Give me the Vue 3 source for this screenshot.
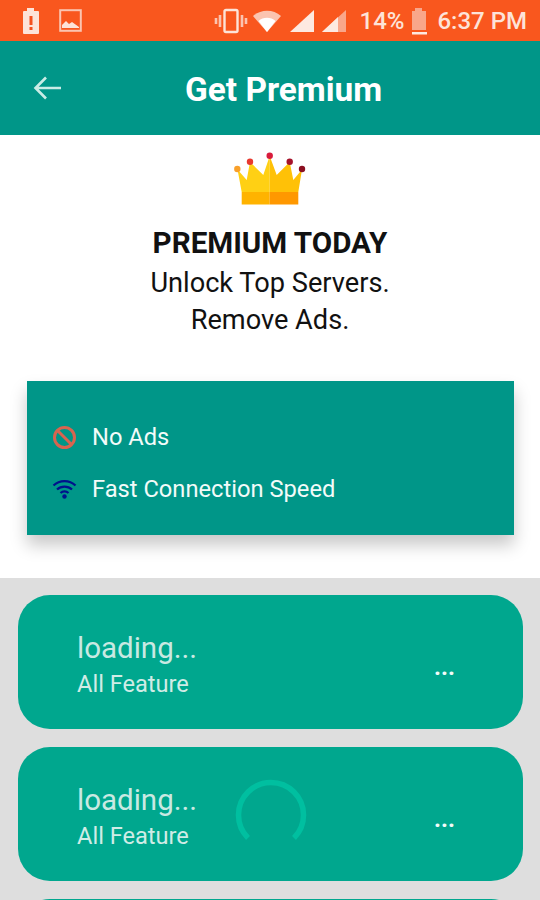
<template>
  <div class="page">
    <div class="status-bar">
      <div class="status-left">
        <svg width="20" height="28" viewBox="0 0 20 28"><path d="M6 1h7v3h4a1 1 0 0 1 1 1v21a1 1 0 0 1-1 1H3a1 1 0 0 1-1-1V5a1 1 0 0 1 1-1h3z" fill="#fde3d8"/><rect x="8.5" y="9" width="3" height="9" fill="#f4511e"/><rect x="8.5" y="20" width="3" height="3" fill="#f4511e"/></svg>
        <svg width="23" height="23" viewBox="0 0 23 23"><rect x="1.2" y="1.2" width="20.6" height="20.6" fill="none" stroke="#fbc4b0" stroke-width="2"/><path d="M3 19v-3l4-4 3 3 3-2 7 5v1z" fill="#fde3d8"/></svg>
      </div>
      <div class="status-right">
        <svg class="vibrate" width="34" height="26" viewBox="0 0 34 26"><rect x="10.5" y="2" width="13" height="22" rx="1.5" fill="none" stroke="#fde3d8" stroke-width="2.4"/><path d="M6 7v12M2 10v6M28 7v12M32 10v6" stroke="#fbc4b0" stroke-width="2.6" fill="none"/></svg>
        <svg class="wifi" width="30" height="24" viewBox="0 0 30 24"><path d="M1 7a21 21 0 0 1 28 0L15 23z" fill="#fbc4b0"/><path d="M6.500 12a13 13 0 0 1 17 0L15 23z" fill="#fff"/></svg>
        <svg class="signal" width="26" height="24" viewBox="0 0 26 24"><path d="M1 23L25 1v22z" fill="#fde9e1"/></svg>
        <svg class="signal-two" width="26" height="24" viewBox="0 0 26 24"><path d="M1 23L25 1v22z" fill="#f9a68a"/><path d="M1 23L17 8v15z" fill="#fde9e1"/></svg>
        <span class="pct">14%</span>
        <svg class="battery" width="18" height="28" viewBox="0 0 18 28"><path d="M5 1h7v3h4v19H2V4h3z" fill="#f9a68a"/><rect x="2" y="25" width="15" height="2.500" fill="#fde9e1"/></svg>
        <span class="clock">6:37 PM</span>
      </div>
    </div>

    <div class="toolbar">
      <svg class="back" width="30" height="30" viewBox="0 0 30 30"><path d="M28 15H3M13 4.500L2.500 15 13 25.500" fill="none" stroke="#c9ece6" stroke-width="2.600"/></svg>
      <h1>Get Premium</h1>
    </div>

    <div class="intro">
      <svg class="crown" width="72" height="52" viewBox="0 0 72 52">
        <path d="M35.700 3L29.300 22 16 9 12.700 27 3.500 16.500 7.700 39H35.700z" fill="#ffd014"/>
        <path d="M35.700 3L42.700 22 55.700 9 59.300 27 68 16.500 64.300 39H35.700z" fill="#ffc107"/>
        <rect x="7.700" y="39" width="28" height="12.500" fill="#ffb300"/>
        <rect x="35.700" y="39" width="28.600" height="12.500" fill="#ff9800"/>
        <circle cx="3.300" cy="16" r="3.200" fill="#f9a02a"/>
        <circle cx="16" cy="8.700" r="3.200" fill="#e8392f"/>
        <circle cx="35.700" cy="2.700" r="3.200" fill="#d81b3c"/>
        <circle cx="55.700" cy="8.700" r="3.200" fill="#a5122a"/>
        <circle cx="68" cy="16" r="3.200" fill="#8b0f20"/>
      </svg>
      <div class="headline">PREMIUM TODAY</div>
      <div class="subline">Unlock Top Servers.</div>
      <div class="subline">Remove Ads.</div>
    </div>

    <div class="feature-wrap">
      <div class="feature-card">
        <div class="feature">
          <svg width="25" height="25" viewBox="0 0 25 25"><circle cx="12.500" cy="12.500" r="10" fill="none" stroke="#d9644f" stroke-width="3"/><path d="M5.500 5.500l14 14" stroke="#d9644f" stroke-width="3"/></svg>
          <span>No Ads</span>
        </div>
        <div class="feature">
          <svg width="25" height="20" viewBox="0 0 25 20"><path d="M1.500 6.500a16 16 0 0 1 22 0M5 10.500a11 11 0 0 1 15 0M8.500 14a6 6 0 0 1 8 0" fill="none" stroke="#00128c" stroke-width="2.300"/><circle cx="12.500" cy="17.500" r="2.200" fill="#00128c"/></svg>
          <span>Fast Connection Speed</span>
        </div>
      </div>
    </div>

    <div class="plans">
      <div v-for="n in 2" :key="n" class="plan">
        <div class="plan-text">
          <div class="plan-name">loading...</div>
          <div class="plan-desc">All Feature</div>
        </div>
        <div class="plan-price">...</div>
      </div>
      <!-- third card only peeks in at the bottom edge -->
      <div class="plan"></div>
      <svg class="spinner" width="76" height="76" viewBox="0 0 76 76"><path d="M15 61A32.500 32.500 0 1 1 61 61" fill="none" stroke="#00bfa0" stroke-width="5.500"/></svg>
    </div>
  </div>
</template>

<script setup>
</script>

<style>
html, body {
  margin: 0;
  overflow: hidden;
}
</style>

<style scoped>
.page {
  position: relative;
  display: flex;
  flex-direction: column;
  width: 540px;
  height: 900px;
  overflow: hidden;
  background: #fff;
  font-family: Roboto, "Liberation Sans", sans-serif;
}

.status-bar {
  display: flex;
  flex: none;
  align-items: center;
  justify-content: space-between;
  height: 41px;
  padding: 0 13px 0 21px;
  box-sizing: border-box;
  background: #f9571e;
}

.status-left, .status-right {
  display: flex;
  align-items: center;
}

.status-left {
  gap: 18px;
}

.status-right {
  color: #fde3d8;
  font-size: 24px;
  font-weight: 500;
}

.vibrate { margin-right: 4px; }
.wifi { margin-right: 7px; }
.signal { margin-right: 6px; }
.signal-two { margin-right: 13px; }
.pct { margin-right: 6px; }
.battery { margin-right: 9px; }

.toolbar {
  display: flex;
  flex: none;
  align-items: center;
  height: 94px;
  padding-left: 33px;
  box-sizing: border-box;
  background: #009688;
}

.back {
  flex: none;
}

.toolbar h1 {
  margin: 2px 0 0 122px;
  color: #fff;
  font-size: 33.4px;
  font-weight: 700;
}

.intro {
  display: flex;
  flex: none;
  flex-direction: column;
  align-items: center;
  height: 245px;
  padding-top: 18px;
  box-sizing: border-box;
  color: #111;
}

.crown {
  flex: none;
  margin-bottom: 19px;
  overflow: visible;
}

.headline {
  margin-bottom: 3px;
  font-size: 29.600px;
  font-weight: 700;
  line-height: 38px;
}

.subline {
  font-size: 27.200px;
  line-height: 37px;
}

.feature-wrap {
  flex: none;
  height: 198px;
  padding: 1px 26px 0 27px;
  box-sizing: border-box;
}

.feature-card {
  display: flex;
  flex-direction: column;
  justify-content: center;
  gap: 20px;
  height: 154px;
  padding: 10px 0 0 25px;
  box-sizing: border-box;
  background: #009688;
  box-shadow: 0 10px 16px rgba(0, 0, 0, 0.22);
}

.feature {
  display: flex;
  align-items: center;
  gap: 15px;
  height: 32px;
  color: #f2fbf9;
  font-size: 23.700px;
}

.feature svg {
  flex: none;
}

.plans {
  position: relative;
  display: flex;
  flex: 1;
  flex-direction: column;
  gap: 18px;
  padding: 17px 17px 0 18px;
  background: #dedede;
}

.plan {
  display: flex;
  flex: none;
  align-items: center;
  justify-content: space-between;
  height: 134px;
  padding: 0 68px 0 59px;
  box-sizing: border-box;
  border-radius: 32px;
  background: #00a78e;
}

.plan-text {
  padding-top: 7px;
}

.plan-name {
  color: #c9e9e2;
  font-size: 29.500px;
  line-height: 38px;
}

.plan-desc {
  color: #d0ece6;
  font-size: 23.600px;
  line-height: 35px;
}

.plan-price {
  margin-top: 10px;
  color: #f2fbf9;
  font-size: 24px;
  font-weight: 700;
}

.spinner {
  position: absolute;
  top: 199px;
  left: 233px;
}
</style>
